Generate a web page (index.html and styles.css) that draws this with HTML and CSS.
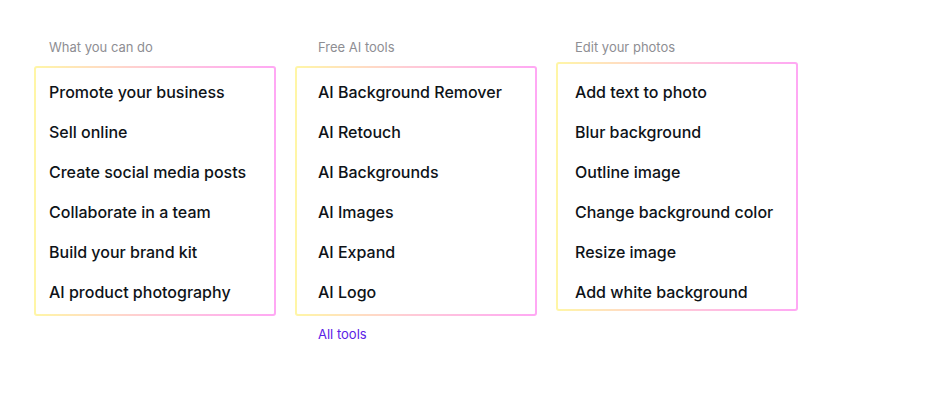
FILE: index.html
```html
<!DOCTYPE html>
<html lang="en">
<head>
    <meta charset="UTF-8">
    <meta name="viewport" content="width=device-width, initial-scale=1.0">
    <title>Features</title>
    <link rel="stylesheet" href="styles.css">
</head>
<body>

<div class="menu">
    <div class="column col-do">
        <div class="column-title">What you can do</div>
        <ul class="card">
            <li><a href="#">Promote your business</a></li>
            <li><a href="#">Sell online</a></li>
            <li><a href="#">Create social media posts</a></li>
            <li><a href="#">Collaborate in a team</a></li>
            <li><a href="#">Build your brand kit</a></li>
            <li><a href="#">AI product photography</a></li>
        </ul>
    </div>

    <div class="column col-tools">
        <div class="column-title">Free AI tools</div>
        <ul class="card">
            <li><a href="#">AI Background Remover</a></li>
            <li><a href="#">AI Retouch</a></li>
            <li><a href="#">AI Backgrounds</a></li>
            <li><a href="#">AI Images</a></li>
            <li><a href="#">AI Expand</a></li>
            <li><a href="#">AI Logo</a></li>
        </ul>
        <a href="#" class="all-link">All tools</a>
    </div>

    <div class="column col-edit">
        <div class="column-title">Edit your photos</div>
        <ul class="card card-raised">
            <li><a href="#">Add text to photo</a></li>
            <li><a href="#">Blur background</a></li>
            <li><a href="#">Outline image</a></li>
            <li><a href="#">Change background color</a></li>
            <li><a href="#">Resize image</a></li>
            <li><a href="#">Add white background</a></li>
        </ul>
    </div>
</div>

</body>
</html>
```

FILE: styles.css
```css
body {
    margin: 0;
    padding: 0;
    background: #fff;
    font-family: Inter, "Noto Sans", sans-serif;
    color: #0e1318;
}

.menu {
    display: flex;
    gap: 19px;
    padding: 37px 0 0 34px;
}

.column {
    width: 242px;
    --indent: 15px;
}

.col-tools {
    --indent: 23px;
}

.col-edit {
    --indent: 19px;
}

.column-title {
    font-size: 13px;
    line-height: 20px;
    color: #8e8e93;
    padding-left: var(--indent);
    margin-bottom: 9px;
}

.card {
    list-style: none;
    margin: 0;
    padding: 4px 0 2px calc(var(--indent) - 2px);
    border: 2px solid transparent;
    border-radius: 3px;
    background:
        linear-gradient(#fff, #fff) padding-box,
        linear-gradient(to right, #fff6a6, #ffc9d8, #ffa8f4) border-box;
}

.card-raised {
    margin-top: -4px;
    padding-top: 8px;
    padding-bottom: 0;
}

.card-raised li:last-child {
    margin-bottom: -3px;
}

.card li {
    height: 40px;
    display: flex;
    align-items: center;
}

.card a {
    font-size: 16px;
    font-weight: 500;
    color: #0e1318;
    text-decoration: none;
}

.all-link {
    display: inline-block;
    margin: 8px 0 0 var(--indent);
    font-size: 13px;
    line-height: 20px;
    color: #5b21e6;
    text-decoration: none;
}
```
